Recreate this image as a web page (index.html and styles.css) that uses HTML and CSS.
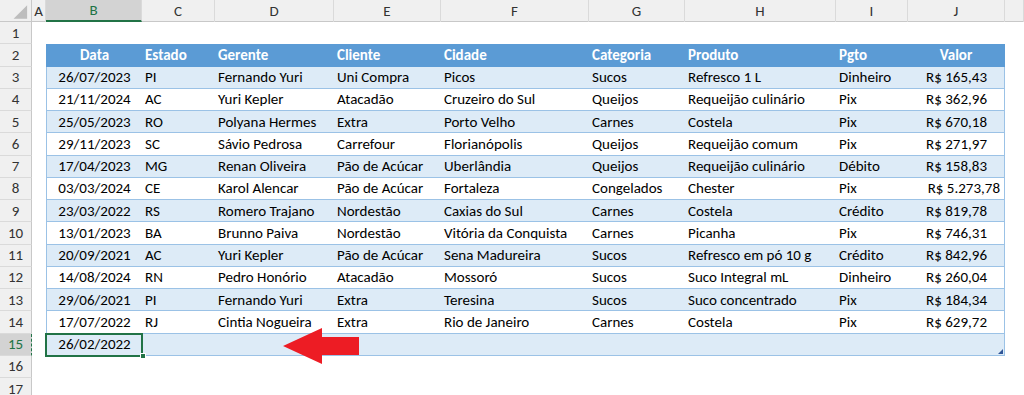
FILE: index.html
```html
<!DOCTYPE html>
<html lang="pt-BR">
<head>
<meta charset="utf-8">
<title>Planilha</title>
<link rel="stylesheet" href="styles.css">
</head>
<body>
<div class="sheet">
  <div class="colheads">
    <div class="corner"><svg width="32" height="22" viewBox="0 0 32 22"><polygon points="28,5 28,19 14,19" fill="#BDBDBD"/></svg></div>
    <div class="ch">A</div><div class="ch sel">B</div><div class="ch">C</div><div class="ch">D</div><div class="ch">E</div><div class="ch">F</div><div class="ch">G</div><div class="ch">H</div><div class="ch">I</div><div class="ch">J</div><div class="ch"></div>
  </div>
  <div class="row"><div class="rh">1</div></div>
  <div class="row"><div class="rh">2</div><div></div>
    <div class="c hd first ctr">Data</div><div class="c hd">Estado</div><div class="c hd">Gerente</div><div class="c hd">Cliente</div><div class="c hd">Cidade</div><div class="c hd">Categoria</div><div class="c hd">Produto</div><div class="c hd">Pgto</div><div class="c hd last ctr">Valor</div>
  </div>
  <div class="row band"><div class="rh">3</div><div></div>
    <div class="c first ctr">26/07/2023</div><div class="c">PI</div><div class="c">Fernando Yuri</div><div class="c">Uni Compra</div><div class="c">Picos</div><div class="c">Sucos</div><div class="c">Refresco 1 L</div><div class="c">Dinheiro</div><div class="c last num">R$ 165,43</div>
  </div>
  <div class="row"><div class="rh">4</div><div></div>
    <div class="c first ctr">21/11/2024</div><div class="c">AC</div><div class="c">Yuri Kepler</div><div class="c">Atacadão</div><div class="c">Cruzeiro do Sul</div><div class="c">Queijos</div><div class="c">Requeijão culinário</div><div class="c">Pix</div><div class="c last num">R$ 362,96</div>
  </div>
  <div class="row band"><div class="rh">5</div><div></div>
    <div class="c first ctr">25/05/2023</div><div class="c">RO</div><div class="c">Polyana Hermes</div><div class="c">Extra</div><div class="c">Porto Velho</div><div class="c">Carnes</div><div class="c">Costela</div><div class="c">Pix</div><div class="c last num">R$ 670,18</div>
  </div>
  <div class="row"><div class="rh">6</div><div></div>
    <div class="c first ctr">29/11/2023</div><div class="c">SC</div><div class="c">Sávio Pedrosa</div><div class="c">Carrefour</div><div class="c">Florianópolis</div><div class="c">Queijos</div><div class="c">Requeijão comum</div><div class="c">Pix</div><div class="c last num">R$ 271,97</div>
  </div>
  <div class="row band"><div class="rh">7</div><div></div>
    <div class="c first ctr">17/04/2023</div><div class="c">MG</div><div class="c">Renan Oliveira</div><div class="c">Pão de Acúcar</div><div class="c">Uberlândia</div><div class="c">Queijos</div><div class="c">Requeijão culinário</div><div class="c">Débito</div><div class="c last num">R$ 158,83</div>
  </div>
  <div class="row"><div class="rh">8</div><div></div>
    <div class="c first ctr">03/03/2024</div><div class="c">CE</div><div class="c">Karol Alencar</div><div class="c">Pão de Acúcar</div><div class="c">Fortaleza</div><div class="c">Congelados</div><div class="c">Chester</div><div class="c">Pix</div><div class="c last num wide">R$ 5.273,78</div>
  </div>
  <div class="row band"><div class="rh">9</div><div></div>
    <div class="c first ctr">23/03/2022</div><div class="c">RS</div><div class="c">Romero Trajano</div><div class="c">Nordestão</div><div class="c">Caxias do Sul</div><div class="c">Carnes</div><div class="c">Costela</div><div class="c">Crédito</div><div class="c last num">R$ 819,78</div>
  </div>
  <div class="row"><div class="rh">10</div><div></div>
    <div class="c first ctr">13/01/2023</div><div class="c">BA</div><div class="c">Brunno Paiva</div><div class="c">Nordestão</div><div class="c">Vitória da Conquista</div><div class="c">Carnes</div><div class="c">Picanha</div><div class="c">Pix</div><div class="c last num">R$ 746,31</div>
  </div>
  <div class="row band"><div class="rh">11</div><div></div>
    <div class="c first ctr">20/09/2021</div><div class="c">AC</div><div class="c">Yuri Kepler</div><div class="c">Pão de Acúcar</div><div class="c">Sena Madureira</div><div class="c">Sucos</div><div class="c">Refresco em pó 10 g</div><div class="c">Crédito</div><div class="c last num">R$ 842,96</div>
  </div>
  <div class="row"><div class="rh">12</div><div></div>
    <div class="c first ctr">14/08/2024</div><div class="c">RN</div><div class="c">Pedro Honório</div><div class="c">Atacadão</div><div class="c">Mossoró</div><div class="c">Sucos</div><div class="c">Suco Integral mL</div><div class="c">Dinheiro</div><div class="c last num">R$ 260,04</div>
  </div>
  <div class="row band"><div class="rh">13</div><div></div>
    <div class="c first ctr">29/06/2021</div><div class="c">PI</div><div class="c">Fernando Yuri</div><div class="c">Extra</div><div class="c">Teresina</div><div class="c">Sucos</div><div class="c">Suco concentrado</div><div class="c">Pix</div><div class="c last num">R$ 184,34</div>
  </div>
  <div class="row"><div class="rh">14</div><div></div>
    <div class="c first ctr">17/07/2022</div><div class="c">RJ</div><div class="c">Cintia Nogueira</div><div class="c">Extra</div><div class="c">Rio de Janeiro</div><div class="c">Carnes</div><div class="c">Costela</div><div class="c">Pix</div><div class="c last num">R$ 629,72</div>
  </div>
  <div class="row band"><div class="rh rsel">15</div><div></div>
    <div class="c first ctr active">26/02/2022<span class="fill"></span></div><div class="c"></div><div class="c"></div><div class="c"></div><div class="c"></div><div class="c"></div><div class="c"></div><div class="c"></div><div class="c last"><span class="resize"></span></div>
  </div>
  <div class="row"><div class="rh">16</div></div>
  <div class="row"><div class="rh">17</div></div>

  <svg class="arrow" width="80" height="40" viewBox="0 0 80 40"><polygon points="0,18 39,0 39,9 76,9 76,27 39,27 39,36" fill="#ED1C24"/></svg>
</div>
</body>
</html>
```

FILE: styles.css
```css
* { box-sizing: border-box; }
html, body { margin: 0; padding: 0; background: #fff; overflow: hidden; }
.sheet {
  position: relative;
  width: 1024px;
  height: 395px;
  font-family: Carlito, Lato, "Liberation Sans", sans-serif;
  font-size: 15px;
  color: #000;
}
.colheads, .row {
  display: grid;
  grid-template-columns: 32px 14px 96px 73px 119px 107px 148px 96px 151px 72px 97px 19px;
}
.colheads {
  height: 22px;
  background: #F0F0F0;
  border-bottom: 1px solid #C8C8C8;
}
.corner { border-right: 1px solid #C8C8C8; display: flex; }
.ch {
  display: flex; align-items: center; justify-content: center;
  color: #333; font-size: 15px;
  border-right: 1px solid #DADADA;
}
.ch.sel { background: #D3D3D3; color: #217346; border-bottom: 2px solid #217346; }
.row { height: 22.25px; }
.rh {
  display: flex; align-items: center; justify-content: center;
  background: #F0F0F0; color: #333; font-size: 15px;
  border-right: 1px solid #C8C8C8;
  border-bottom: 1px solid #DADADA;
}
.rh.rsel { background: #D3D3D3; color: #217346; border-right: 1px dashed #217346; }
.c {
  position: relative;
  display: flex; align-items: center;
  padding: 0 3px;
  white-space: nowrap;
  border-bottom: 1px solid #9BC2E6;
}
.band .c { background: #DDEBF7; }
.c.hd { background: #5B9BD5; color: #fff; font-weight: bold; border-bottom: 1px solid #5B9BD5; }
.c.first { border-left: 1px solid #9BC2E6; }
.c.last { border-right: 1px solid #9BC2E6; }
.c.hd.first, .c.hd.last { border-color: #5B9BD5; }
.ctr { justify-content: center; }
.num { justify-content: flex-end; padding-right: 17px; }
.num.wide { padding-right: 4px; }
.c.active { outline: 2px solid #217346; outline-offset: -1px; z-index: 2; }
.fill {
  position: absolute; right: -4px; bottom: -4px;
  width: 6px; height: 6px; background: #217346; border: 1px solid #fff;
}
.resize {
  position: absolute; right: 1px; bottom: 1px;
  width: 0; height: 0;
  border-left: 5px solid transparent; border-bottom: 5px solid #2F5597;
}
.arrow { position: absolute; left: 283px; top: 328px; }
```
